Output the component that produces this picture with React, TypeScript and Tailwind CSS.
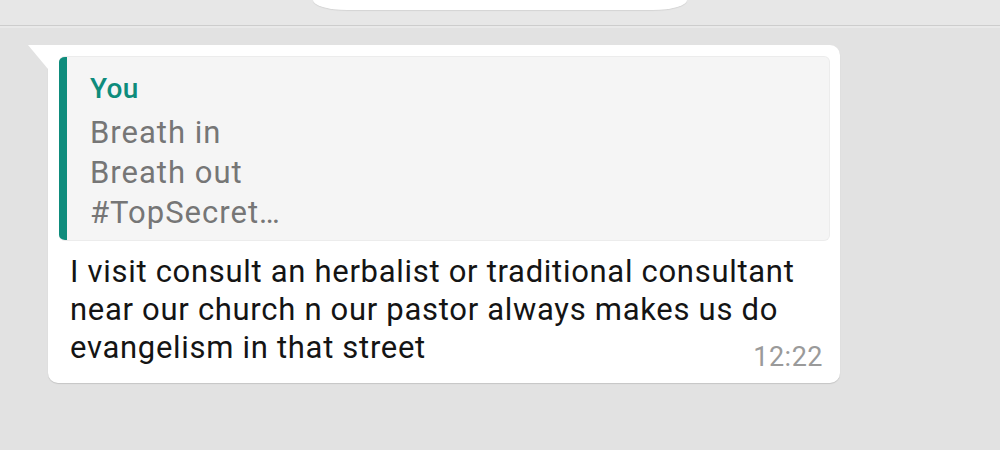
export default function App() {
  return (
    <div className="w-[1000px] h-[450px] overflow-hidden bg-[#e2e2e2] font-['Roboto',sans-serif]">
      {/* top strip with the date pill cut off by the screen edge */}
      <div className="h-[25px] bg-[#e7e7e7] flex justify-center">
        <div className="w-[374px] h-[10px] bg-white rounded-bl-[34px_10px] rounded-br-[34px_10px] shadow-[0_1px_1px_rgba(0,0,0,0.08)]" />
      </div>
      <div className="h-px bg-[#cdcdcd]" />
      <div className="h-[2px] bg-[#e9e9e9]" />

      <div className="relative ml-[48px] mt-[17px] w-[792px] bg-white rounded-[10px] rounded-tl-none shadow-[0_1px_1px_rgba(0,0,0,0.13)] flex flex-col">
        <svg className="absolute left-[-20px] top-0" width="20" height="24" viewBox="0 0 20 24">
          <path d="M0 0 H20 V24 Z" fill="#ffffff" />
        </svg>

        <div className="ml-[11px] mr-[10px] mt-[11px] h-[185px] flex rounded-[6px] overflow-hidden bg-[#f5f5f5] border border-[#ececec] border-l-0">
          <div className="w-[8px] bg-[#0e8c7c] shrink-0" />
          <div className="pl-[23px] pt-[16px]">
            <div className="text-[28px] leading-[32px] font-medium tracking-[0.3px] text-[#0e8c7c]">You</div>
            <div className="mt-[8px] text-[31px] leading-[40px] tracking-[1px] text-[#767676]">
              <div>Breath in</div>
              <div>Breath out</div>
              <div>#TopSecret…</div>
            </div>
          </div>
        </div>

        <p className="mt-[12px] pl-[22px] pr-[10px] text-[31px] leading-[38px] tracking-[0.7px] text-[#141414]">
          I visit consult an herbalist or traditional consultant
          <br />
          near our church n our pastor always makes us do
          <br />
          evangelism in that street
        </p>
        <div className="self-end -mt-[25px] pr-[17px] pb-[11px] text-[27px] leading-[30px] tracking-[0.5px] text-[#9a9a9a]">
          12:22
        </div>
      </div>
    </div>
  );
}
